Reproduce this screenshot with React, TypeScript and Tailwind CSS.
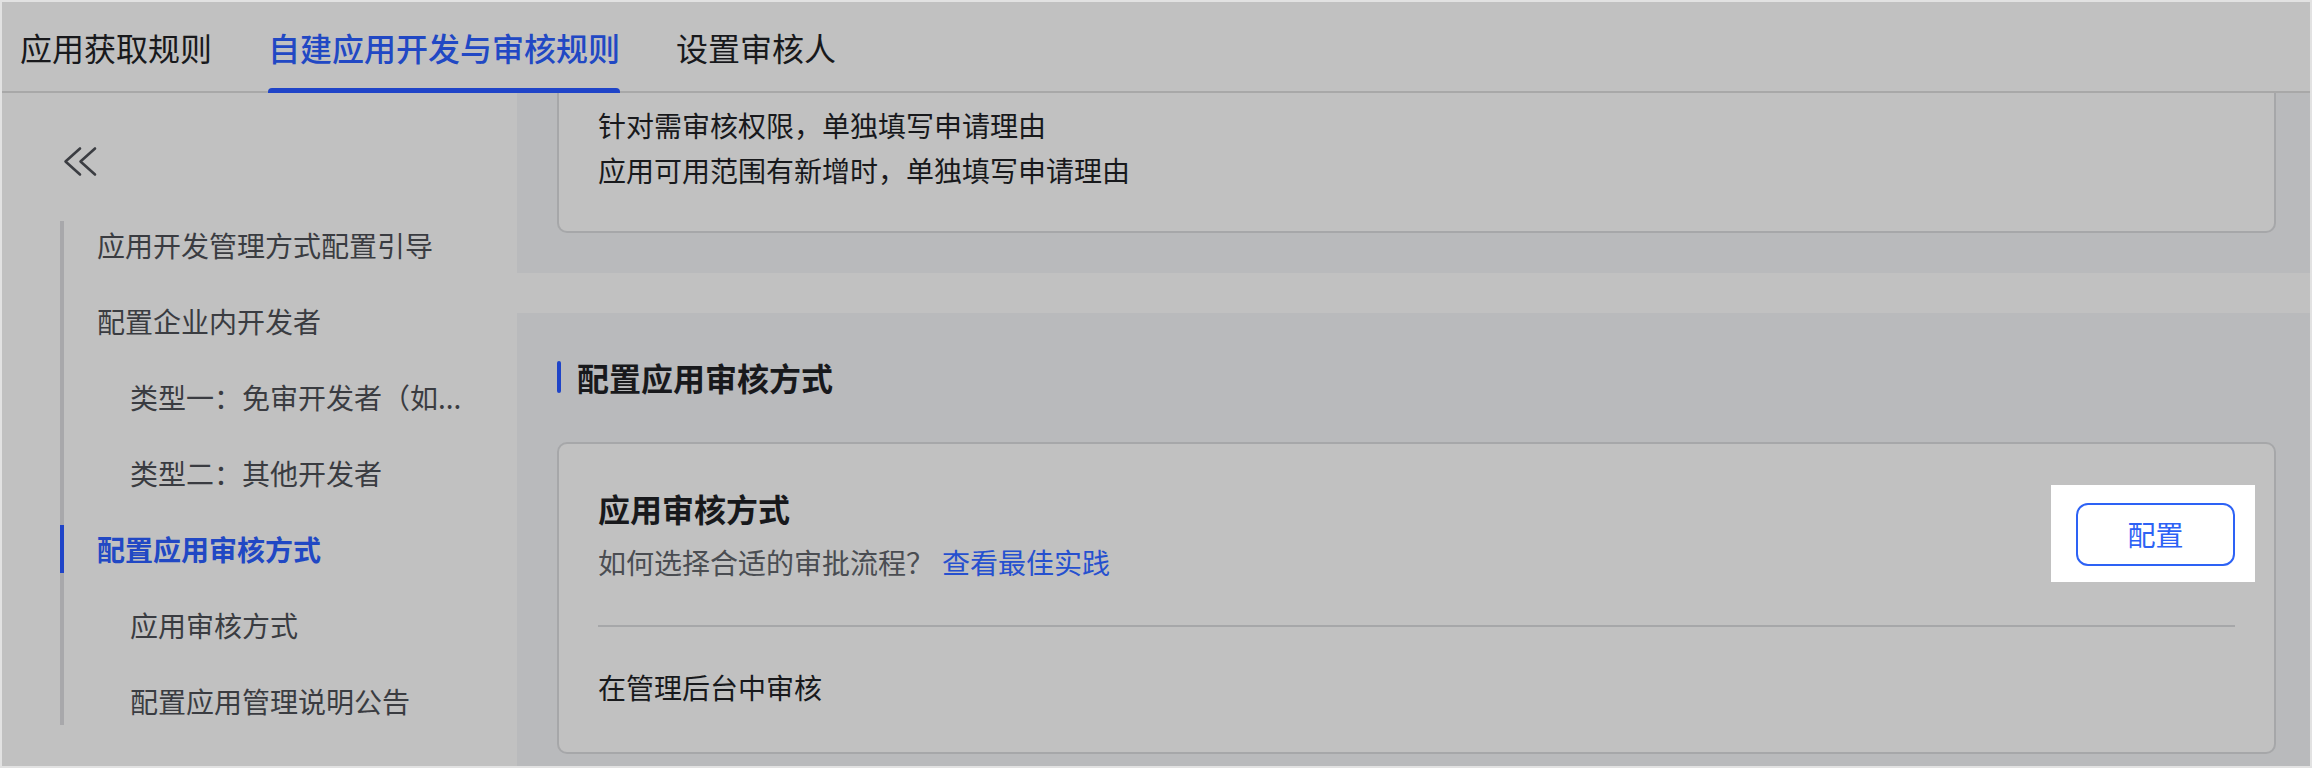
const font = { fontFamily: '"Noto Sans CJK SC", "Noto Sans", sans-serif' };

const tabs = [
  { label: "应用获取规则", active: false },
  { label: "自建应用开发与审核规则", active: true },
  { label: "设置审核人", active: false },
];

const navItems = [
  { label: "应用开发管理方式配置引导", level: 1 },
  { label: "配置企业内开发者", level: 1 },
  { label: "类型一：免审开发者（如...", level: 2 },
  { label: "类型二：其他开发者", level: 2 },
  { label: "配置应用审核方式", level: 1, active: true },
  { label: "应用审核方式", level: 2 },
  { label: "配置应用管理说明公告", level: 2 },
];

function CollapseIcon() {
  return (
    <svg width="36" height="32" viewBox="0 0 36 32" fill="none" className="ml-[2px]">
      <path d="M18 2.5 L3.5 15.5 L18 28.5" stroke="#3b3d42" strokeWidth="2.6" strokeLinecap="round" strokeLinejoin="round" />
      <path d="M33 2.5 L18.5 15.5 L33 28.5" stroke="#3b3d42" strokeWidth="2.6" strokeLinecap="round" strokeLinejoin="round" />
    </svg>
  );
}

function TabBar() {
  return (
    <div className="flex h-[91px] shrink-0 items-center gap-[56px] border-b-2 border-[#a8a8a8] pl-[18px]">
      {tabs.map((t) => (
        <div key={t.label} className="relative flex h-full items-center">
          <span
            className={
              t.active
                ? "text-[32px] leading-[44px] font-medium text-[#2148c4]"
                : "text-[32px] leading-[44px] text-[#18191c]"
            }
          >
            {t.label}
          </span>
          {t.active && (
            <div className="absolute bottom-[-2px] left-0 right-0 h-[5px] rounded-t-[4px] bg-[#1f44c8]" />
          )}
        </div>
      ))}
    </div>
  );
}

function Sidebar() {
  return (
    <div className="flex w-[515px] shrink-0 flex-col pl-[58px] pt-[53px]">
      <CollapseIcon />
      <div className="mt-[43px] flex flex-col gap-[28px] border-l-4 border-[#a8a8ab]">
        {navItems.map((item) => (
          <div
            key={item.label}
            className={
              item.active
                ? "-ml-[4px] flex h-[48px] items-center border-l-4 border-[#1f44c8] pl-[33px] text-[28px] font-semibold text-[#2148c4]"
                : item.level === 1
                  ? "flex h-[48px] items-center pl-[33px] text-[28px] text-[#3a3c41]"
                  : "flex h-[48px] items-center pl-[66px] text-[28px] text-[#3a3c41]"
            }
          >
            <span className="whitespace-nowrap">{item.label}</span>
          </div>
        ))}
      </div>
    </div>
  );
}

function Content() {
  return (
    <div className="flex min-w-0 flex-1 flex-col gap-[40px]">
      <div className="shrink-0 bg-[#b9babc] pb-[40px] pl-[40px] pr-[34px]">
        <div className="rounded-b-[10px] border-2 border-t-0 border-[#a6a7a9] bg-[#c1c1c1] px-[39px] pb-[38px] pt-[10px] text-[28px] leading-[45px] text-[#18191c]">
          <div>针对需审核权限，单独填写申请理由</div>
          <div>应用可用范围有新增时，单独填写申请理由</div>
        </div>
      </div>

      <div className="flex-1 bg-[#b9babc] pl-[40px] pr-[34px] pt-[48px]">
        <div className="flex h-[32px] items-center gap-[16px]">
          <div className="h-[32px] w-[4px] rounded-full bg-[#1f44c8]" />
          <span className="text-[32px] leading-[32px] font-semibold text-[#18191c]">配置应用审核方式</span>
        </div>

        <div className="mt-[49px] rounded-[10px] border-2 border-[#a6a7a9] bg-[#c1c1c1] px-[39px] pb-[43px] pt-[40px]">
          <div className="flex items-center justify-between pb-[41px]">
            <div className="flex flex-col">
              <span className="text-[32px] leading-[48px] font-semibold text-[#18191c]">应用审核方式</span>
              <div className="mt-[8px] flex items-center text-[28px] leading-[44px]">
                <span className="text-[#4a4d52]">如何选择合适的审批流程？</span>
                <span className="ml-[8px] text-[#2650cf]">查看最佳实践</span>
              </div>
            </div>
            <div className="relative">
              <div className="absolute -bottom-[16px] -left-[25px] -right-[20px] -top-[18px] bg-white" />
              <button className="relative flex h-[63px] w-[159px] items-center justify-center rounded-[12px] border-2 border-[#2d62f5] text-[28px] text-[#2d62f5]">
                配置
              </button>
            </div>
          </div>
          <div className="h-[2px] bg-[#a6a7a9]" />
          <div className="pt-[38px] text-[28px] leading-[44px] text-[#18191c]">在管理后台中审核</div>
        </div>
      </div>
    </div>
  );
}

export default function App() {
  return (
    <div
      style={font}
      className="flex h-[768px] w-[2312px] flex-col overflow-hidden border-2 border-[#e2e2e2] bg-[#c1c1c1]"
    >
      <TabBar />
      <div className="flex min-h-0 flex-1">
        <Sidebar />
        <Content />
      </div>
    </div>
  );
}
